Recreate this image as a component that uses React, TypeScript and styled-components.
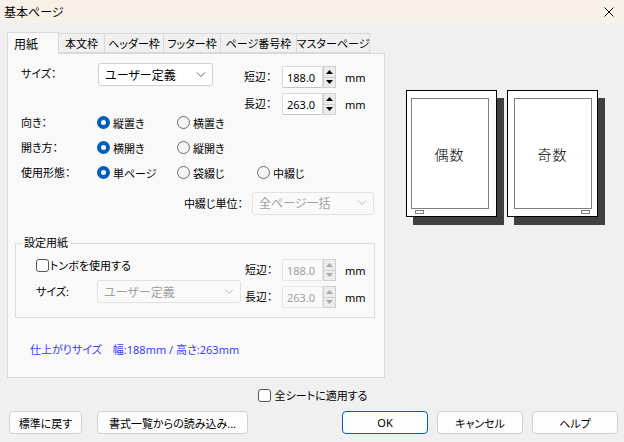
import React from 'react';
import styled, { createGlobalStyle } from 'styled-components';

const GlobalStyle = createGlobalStyle`
  html, body {
    margin: 0;
    padding: 0;
    background: #f0f0f0;
  }
  body {
    font-family: "Noto Sans", "Noto Sans CJK JP", sans-serif;
    font-size: 11px;
    color: #000;
    font-feature-settings: "palt" 1;
  }
  * { box-sizing: border-box; }
`;

const tabs = [
  { label: '用紙', w: 52 },
  { label: '本文枠', w: 47 },
  { label: 'ヘッダー枠', w: 60 },
  { label: 'フッター枠', w: 58 },
  { label: 'ページ番号枠', w: 77 },
  { label: 'マスターページ', w: 74 },
];

const Chevron: React.FC<{ disabled?: boolean }> = ({ disabled }) => (
  <svg width="10" height="6" viewBox="0 0 10 6">
    <path d="M1 0.5l4 4 4-4" fill="none" stroke={disabled ? '#b8b8b8' : '#606060'} strokeWidth="1" />
  </svg>
);

const Arrow: React.FC<{ up?: boolean; disabled?: boolean }> = ({ up, disabled }) => (
  <svg width="7" height="4" viewBox="0 0 7 4">
    <path d={up ? 'M0 4h7L3.5 0z' : 'M0 0h7L3.5 4z'} fill={disabled ? '#a8a8a8' : '#000'} />
  </svg>
);

const Dim: React.FC<{ label: string; value: string; labelW: number; disabled?: boolean }> = ({
  label,
  value,
  labelW,
  disabled,
}) => (
  <DimRow>
    <FieldLabel $w={labelW}>{label}</FieldLabel>
    <NumberBox $disabled={disabled}>{value}</NumberBox>
    <Spinner>
      <SpinHalf>
        <Arrow up disabled={disabled} />
      </SpinHalf>
      <SpinHalf>
        <Arrow disabled={disabled} />
      </SpinHalf>
    </Spinner>
    <Unit>mm</Unit>
  </DimRow>
);

const Radio: React.FC<{ label: string; checked?: boolean }> = ({ label, checked }) => (
  <Option>
    <RadioDot $checked={checked} />
    <span>{label}</span>
  </Option>
);

const Page: React.FC<{ label: string; side: 'left' | 'right' }> = ({ label, side }) => (
  <PageCard $side={side}>
    <PageInner>{label}</PageInner>
    <MarkerRow $side={side}>
      <Marker />
    </MarkerRow>
  </PageCard>
);

const App: React.FC = () => (
  <Window>
    <GlobalStyle />
    <TitleBar>
      <span>基本ページ</span>
      <svg width="10" height="10" viewBox="0 0 10 10">
        <path d="M0.5 0.5l9 9M9.5 0.5l-9 9" stroke="#000" strokeWidth="1" />
      </svg>
    </TitleBar>
    <Body>
      <Main>
        <LeftCol>
          <TabStrip>
            {tabs.map((t, i) => (
              <Tab key={t.label} $w={t.w} $active={i === 0}>
                {t.label}
              </Tab>
            ))}
          </TabStrip>
          <Panel>
            <TopBlock>
              <FieldLabel $w={77}>サイズ：</FieldLabel>
              <Select $w={115}>
                <span>ユーザー定義</span>
                <Chevron />
              </Select>
              <DimStack $ml={31} $mt={3}>
                <Dim label="短辺：" value="188.0" labelW={38} />
                <Dim label="長辺：" value="263.0" labelW={38} />
              </DimStack>
            </TopBlock>
            <RadioRow>
              <FieldLabel $w={76}>向き：</FieldLabel>
              <Radio label="縦置き" checked />
              <Radio label="横置き" />
            </RadioRow>
            <RadioRow>
              <FieldLabel $w={76}>開き方：</FieldLabel>
              <Radio label="横開き" checked />
              <Radio label="縦開き" />
            </RadioRow>
            <RadioRow>
              <FieldLabel $w={76}>使用形態：</FieldLabel>
              <Radio label="単ページ" checked />
              <Radio label="袋綴じ" />
              <Radio label="中綴じ" />
            </RadioRow>
            <ComboRow>
              <span>中綴じ単位：</span>
              <Select $w={122} $disabled>
                <span>全ページ一括</span>
                <Chevron disabled />
              </Select>
            </ComboRow>
            <Group>
              <Legend>設定用紙</Legend>
              <GroupBody>
                <GroupLeft>
                  <CheckRow>
                    <CheckBox />
                    <span>トンボを使用する</span>
                  </CheckRow>
                  <SizeRow>
                    <FieldLabel $w={61}>サイズ:</FieldLabel>
                    <Select $w={144} $disabled>
                      <span>ユーザー定義</span>
                      <Chevron disabled />
                    </Select>
                  </SizeRow>
                </GroupLeft>
                <DimStack $ml={4} $mt={8}>
                  <Dim label="短辺：" value="188.0" labelW={37} disabled />
                  <Dim label="長辺：" value="263.0" labelW={37} disabled />
                </DimStack>
              </GroupBody>
            </Group>
            <FinishText>仕上がりサイズ　幅:188mm / 高さ:263mm</FinishText>
          </Panel>
        </LeftCol>
        <Preview>
          <Page label="偶数" side="left" />
          <Page label="奇数" side="right" />
        </Preview>
      </Main>
      <ApplyRow>
        <CheckBox />
        <span>全シートに適用する</span>
      </ApplyRow>
      <ButtonRow>
        <ButtonGroup $gap={15}>
          <Button $w={73}>標準に戻す</Button>
          <Button $w={151}>書式一覧からの読み込み...</Button>
        </ButtonGroup>
        <ButtonGroup $gap={9}>
          <Button $w={86} $primary>OK</Button>
          <Button $w={86}>キャンセル</Button>
          <Button $w={86}>ヘルプ</Button>
        </ButtonGroup>
      </ButtonRow>
    </Body>
  </Window>
);

export default App;

const Window = styled.div`
  width: 624px;
  height: 442px;
  display: flex;
  flex-direction: column;
  overflow: hidden;
  background: #f0f0f0;
`;

const TitleBar = styled.div`
  height: 23px;
  flex: none;
  display: flex;
  align-items: center;
  justify-content: space-between;
  padding: 0 10px 0 4px;
  background: #f9f1e8;
  font-size: 12px;
`;

const Body = styled.div`
  flex: 1;
  display: flex;
  flex-direction: column;
  padding: 9px 6px 0 7px;
`;

const Main = styled.div`
  display: flex;
  height: 346px;
`;

const LeftCol = styled.div`
  width: 378px;
  display: flex;
  flex-direction: column;
`;

const TabStrip = styled.div`
  position: relative;
  z-index: 1;
  display: flex;
  align-items: flex-end;
  height: 22px;
  margin-bottom: -1px;
`;

const Tab = styled.div<{ $w: number; $active?: boolean }>`
  width: ${(p) => p.$w}px;
  height: ${(p) => (p.$active ? 22 : 20)}px;
  margin-bottom: ${(p) => (p.$active ? 0 : 1)}px;
  display: flex;
  align-items: center;
  justify-content: ${(p) => (p.$active ? 'flex-start' : 'center')};
  padding-left: ${(p) => (p.$active ? 6 : 0)}px;
  border: 1px solid #d9d9d9;
  border-bottom: ${(p) => (p.$active ? 'none' : '1px solid #d9d9d9')};
  background: ${(p) => (p.$active ? '#f9f9f9' : '#f0f0f0')};
  font-size: ${(p) => (p.$active ? 12 : 11)}px;
  white-space: nowrap;

  & + & {
    margin-left: -1px;
  }
`;

const Panel = styled.div`
  flex: 1;
  display: flex;
  flex-direction: column;
  background: #f9f9f9;
  border: 1px solid #d9d9d9;
  padding: 9px 0 0 7px;
`;

const TopBlock = styled.div`
  display: flex;
  height: 47px;
  padding-left: 6px;
`;

const FieldLabel = styled.div<{ $w: number }>`
  width: ${(p) => p.$w}px;
  flex: none;
  white-space: nowrap;
  line-height: 22px;
`;

const Select = styled.div<{ $w: number; $disabled?: boolean }>`
  width: ${(p) => p.$w}px;
  height: 23px;
  flex: none;
  display: flex;
  align-items: center;
  justify-content: space-between;
  padding: 0 6px 0 6px;
  background: ${(p) => (p.$disabled ? '#fafafa' : '#fff')};
  border: 1px solid ${(p) => (p.$disabled ? '#e2e2e2' : '#d0d0d0')};
  border-radius: 3px;
  color: ${(p) => (p.$disabled ? '#a0a0a0' : '#000')};
  font-size: 12px;
  white-space: nowrap;
`;

const DimStack = styled.div<{ $ml: number; $mt: number }>`
  display: flex;
  flex-direction: column;
  gap: 5px;
  margin-left: ${(p) => p.$ml}px;
  margin-top: ${(p) => p.$mt}px;
`;

const DimRow = styled.div`
  display: flex;
  align-items: center;
  height: 22px;
`;

const NumberBox = styled.div<{ $disabled?: boolean }>`
  width: 41px;
  height: 22px;
  display: flex;
  align-items: center;
  padding-left: 4px;
  background: ${(p) => (p.$disabled ? '#fafafa' : '#fff')};
  border: 1px solid ${(p) => (p.$disabled ? '#e4e4e4' : '#dadada')};
  border-bottom-color: ${(p) => (p.$disabled ? '#e4e4e4' : '#c4c4c4')};
  color: ${(p) => (p.$disabled ? '#a0a0a0' : '#000')};
  border-radius: 2px;
`;

const Spinner = styled.div`
  width: 13px;
  height: 22px;
  display: flex;
  flex-direction: column;
`;

const SpinHalf = styled.div`
  flex: 1;
  display: flex;
  align-items: center;
  justify-content: center;
  background: #ececec;
  border: 1px solid #cfcfcf;

  & + & {
    border-top: none;
  }
`;

const Unit = styled.span`
  margin-left: 9px;
`;

const RadioRow = styled.div`
  display: flex;
  align-items: center;
  height: 25px;
  padding-left: 6px;
`;

const Option = styled.div`
  width: 80px;
  display: flex;
  align-items: center;
  gap: 3px;
  white-space: nowrap;
`;

const RadioDot = styled.div<{ $checked?: boolean }>`
  width: 13px;
  height: 13px;
  flex: none;
  border-radius: 50%;
  background: ${(p) => (p.$checked ? '#fff' : '#f5f5f5')};
  border: ${(p) => (p.$checked ? '4px solid #005fb8' : '1px solid #6b6b6b')};
`;

const ComboRow = styled.div`
  display: flex;
  align-items: center;
  justify-content: flex-end;
  gap: 9px;
  height: 22px;
  margin-top: 7px;
  padding-right: 10px;
`;

const Group = styled.fieldset`
  margin: 21px 9px 0 0;
  padding: 0 8px 9px 6px;
  border: 1px solid #dcdcdc;
  min-width: 0;
`;

const Legend = styled.legend`
  padding: 0 2px;
  line-height: 16px;
`;

const GroupBody = styled.div`
  display: flex;
`;

const GroupLeft = styled.div`
  display: flex;
  flex-direction: column;
  margin-left: 14px;
`;

const CheckRow = styled.div`
  display: flex;
  align-items: center;
  gap: 1px;
  height: 20px;
  margin-top: 4px;
`;

const CheckBox = styled.div`
  width: 13px;
  height: 13px;
  flex: none;
  background: #fff;
  border: 1px solid #555;
  border-radius: 3px;
`;

const SizeRow = styled.div`
  display: flex;
  align-items: center;
  margin-top: 5px;
`;

const FinishText = styled.div`
  margin: 24px 0 0 15px;
  line-height: 16px;
  color: #3c3cf8;
`;

const Preview = styled.div`
  flex: 1;
  display: flex;
  justify-content: center;
  align-items: flex-start;
  gap: 10px;
  padding-top: 58px;
`;

const PageCard = styled.div<{ $side: 'left' | 'right' }>`
  width: 91px;
  height: 127px;
  display: flex;
  flex-direction: column;
  background: #fff;
  border: 1px solid #000;
  box-shadow: 7px 8px 0 #404040;
  padding: ${(p) => (p.$side === 'left' ? '7px 7px 0 4px' : '7px 5px 0 6px')};
`;

const PageInner = styled.div`
  height: 111px;
  display: flex;
  align-items: center;
  justify-content: center;
  border: 1px solid #808080;
  font-family: "Noto Sans CJK JP", sans-serif;
  font-size: 14px;
  font-weight: 300;
  letter-spacing: 1px;
`;

const MarkerRow = styled.div<{ $side: 'left' | 'right' }>`
  display: flex;
  justify-content: ${(p) => (p.$side === 'left' ? 'flex-start' : 'flex-end')};
  padding: ${(p) => (p.$side === 'left' ? '0 0 0 4px' : '0 2px 0 0')};
  margin-top: 1px;
`;

const Marker = styled.div`
  width: 9px;
  height: 4px;
  border: 1px solid #808080;
`;

const ApplyRow = styled.div`
  display: flex;
  align-items: center;
  justify-content: center;
  gap: 4px;
  height: 22px;
  margin-top: 6px;
`;

const ButtonRow = styled.div`
  display: flex;
  justify-content: space-between;
  margin-top: 5px;
  padding-left: 2px;
`;

const ButtonGroup = styled.div<{ $gap: number }>`
  display: flex;
  gap: ${(p) => p.$gap}px;
`;

const Button = styled.div<{ $w: number; $primary?: boolean }>`
  width: ${(p) => p.$w}px;
  height: 23px;
  display: flex;
  align-items: center;
  justify-content: center;
  background: #fdfdfd;
  border: 1px solid ${(p) => (p.$primary ? '#005fb8' : '#d0d0d0')};
  border-radius: 4px;
  white-space: nowrap;
`;
